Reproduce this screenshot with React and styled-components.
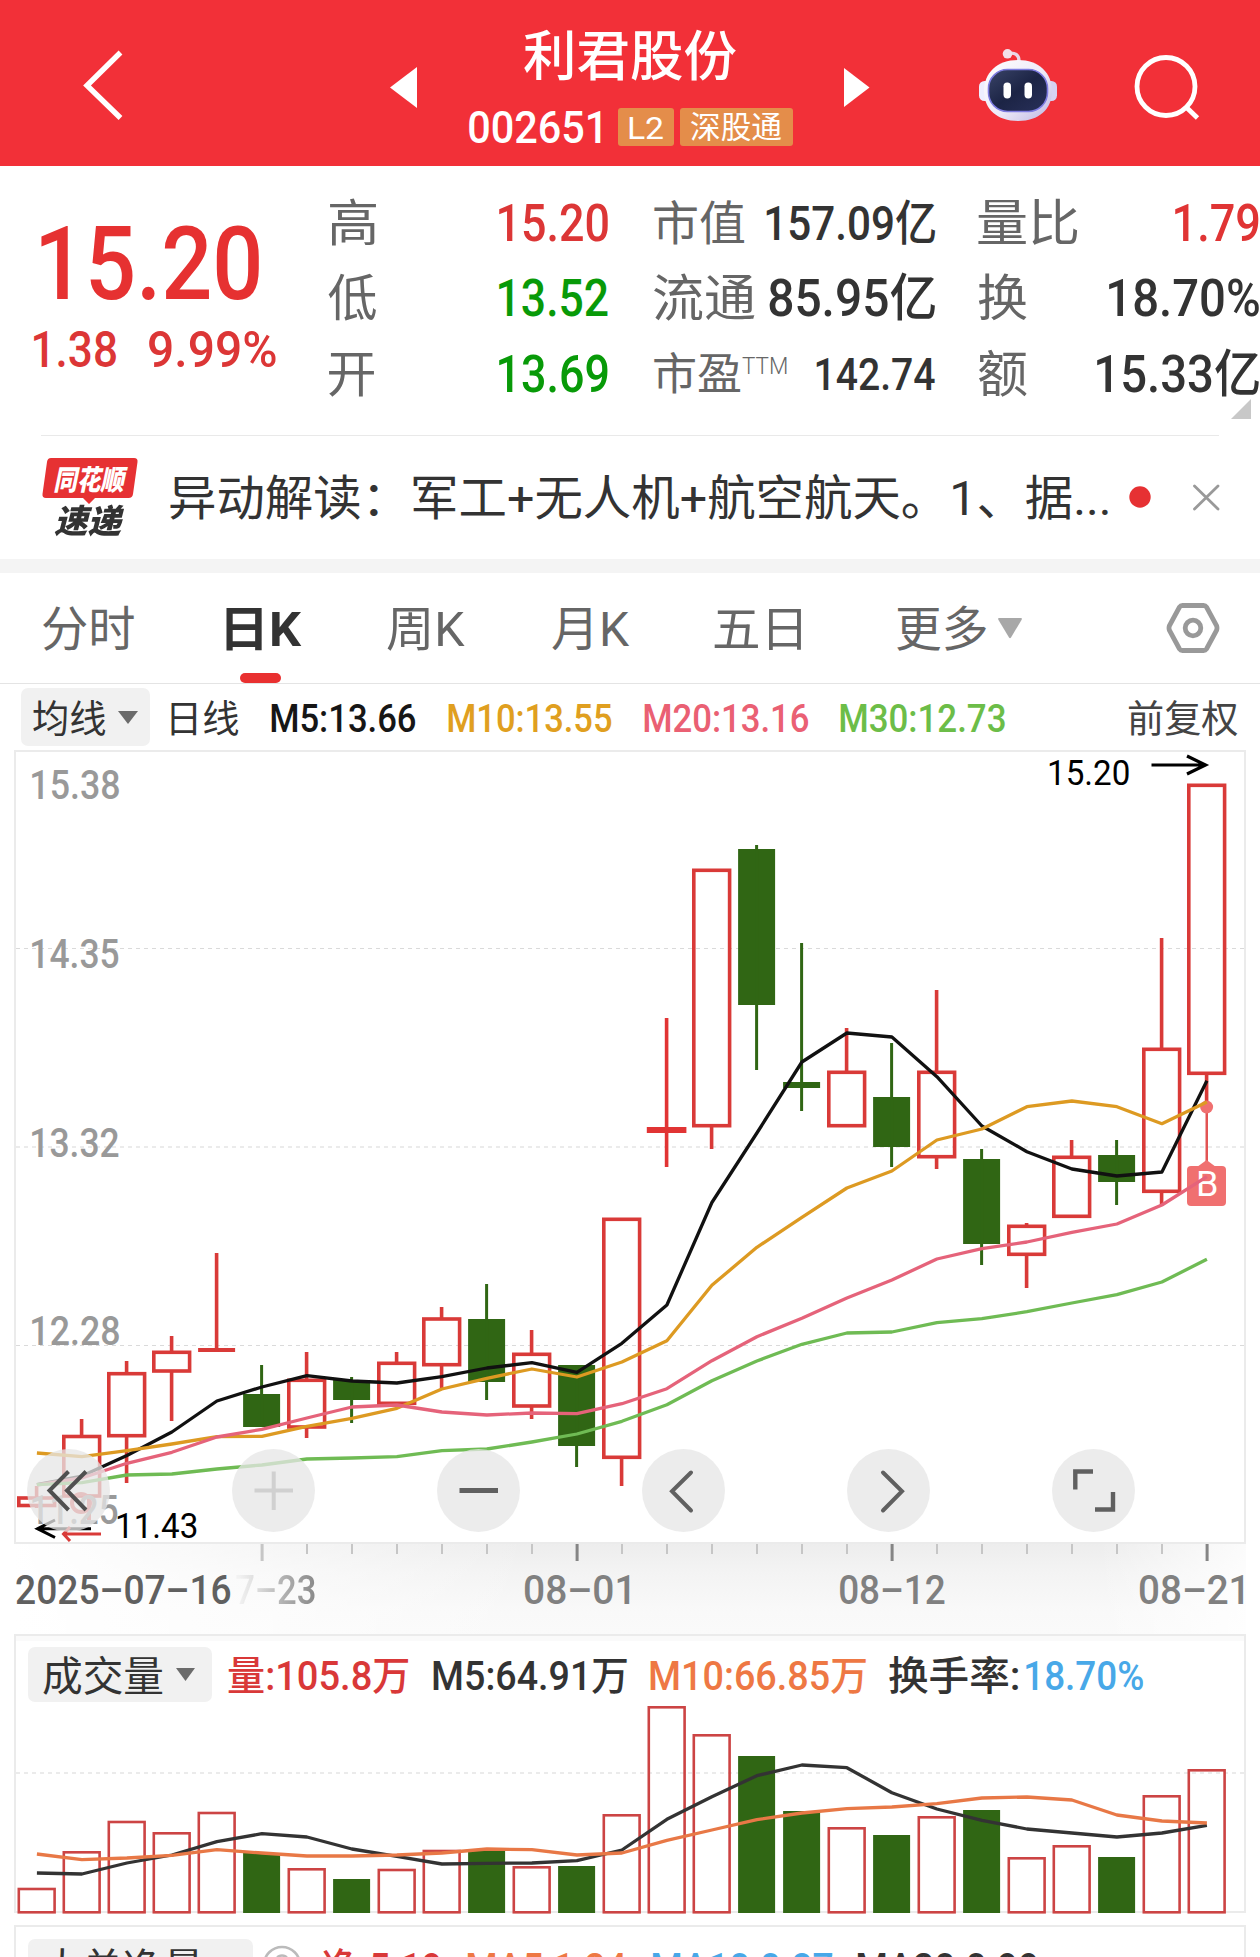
import React, { useLayoutEffect, useRef, useState } from 'react';
import styled, { createGlobalStyle, css } from 'styled-components';

const FONT = 'Roboto, "Noto Sans CJK SC", sans-serif';
const CJK = '"Noto Sans CJK SC", sans-serif';

const GlobalStyle = createGlobalStyle`
  * { box-sizing: border-box; }
  body { margin: 0; background: #fff; }
`;

/* ---------- text condensed to an exact width ---------- */

const FitBox = styled.div`
  flex: none;
  width: ${(p) => p.$w}px;
  height: ${(p) => p.$h}px;
  line-height: ${(p) => p.$h}px;
  margin: ${(p) => p.$m || 0};
  font-family: ${(p) => (p.$cjk ? CJK : FONT)};
  font-size: ${(p) => p.$size}px;
  font-weight: ${(p) => p.$weight || 400};
  font-style: ${(p) => (p.$italic ? 'italic' : 'normal')};
  color: ${(p) => p.$color || 'inherit'};
  white-space: pre;
`;

const FitText = styled.span`
  display: inline-block;
  transform-origin: 0 50%;
  ${(p) =>
    p.$fade &&
    css`
      background: linear-gradient(90deg, #f2f2f2 5%, #d9d9d9 30%, #b0b0b0 60%, #888 100%);
      background-clip: text;
      -webkit-background-clip: text;
      color: transparent;
    `}
`;

function Fit({ children, w, h = 50, dy = 1, size, weight, color, m, cjk, italic, fade }) {
  const ref = useRef(null);
  const [fit, setFit] = useState({ k: 1, x: 0 });
  useLayoutEffect(() => {
    const s = getComputedStyle(ref.current);
    const ctx = document.createElement('canvas').getContext('2d');
    ctx.font = `${s.fontStyle} ${s.fontWeight} ${s.fontSize} ${s.fontFamily}`;
    const t = ctx.measureText(String(children));
    const k = w / (t.actualBoundingBoxRight + t.actualBoundingBoxLeft);
    setFit({ k, x: t.actualBoundingBoxLeft * k });
  }, [children, w]);
  return (
    <FitBox $w={w} $h={h} $size={size} $weight={weight} $color={color} $m={m} $cjk={cjk} $italic={italic}>
      <FitText ref={ref} $fade={fade} style={{ transform: `translate(${fit.x}px, ${dy}px) scaleX(${fit.k})` }}>
        {children}
      </FitText>
    </FitBox>
  );
}

/* ---------- page ---------- */

const Page = styled.div`
  width: 1260px;
  height: 1957px;
  overflow: hidden;
  background: #fff;
  display: flex;
  flex-direction: column;
  > * { flex: none; }
`;

/* ---------- header ---------- */

const Header = styled.header`
  height: 166px;
  background: #f23038;
  display: flex;
  align-items: flex-start;
  color: #fff;
`;

const HeaderIcon = styled.svg`
  display: block;
  flex: none;
  margin: ${(p) => p.$m};
`;

const TitleBlock = styled.div`
  width: 325px;
  margin-left: 52px;
  padding-top: 26px;
`;

const CodeRow = styled.div`
  display: flex;
  align-items: center;
  height: 38px;
  margin-top: 22px;
`;

const Badge = styled.div`
  width: ${(p) => p.$w}px;
  height: 38px;
  margin-left: ${(p) => p.$ml}px;
  background: #e48d4a;
  border-radius: 3px;
  display: flex;
  align-items: center;
  justify-content: center;
`;

/* ---------- quote board ---------- */

const Quotes = styled.section`
  position: relative;
  height: 269px;
  display: flex;
  padding-left: 34px;
`;

const PriceBlock = styled.div`
  width: 294.6px;
  padding-top: 37px;
`;

const ChangeRow = styled.div`
  display: flex;
  gap: 32.5px;
  margin-top: 1px;
`;

const StatColumn = styled.div`
  width: ${(p) => p.$w}px;
  margin-right: ${(p) => p.$mr}px;
  padding-top: 19px;
`;

const StatRow = styled.div`
  height: 75.6px;
  display: flex;
  align-items: center;
  justify-content: space-between;
`;

const StatLabel = styled.div`
  display: flex;
  align-items: center;
  color: #666;
`;

const Corner = styled.div`
  position: absolute;
  left: 1231px;
  top: 233px;
  border-left: 20px solid transparent;
  border-bottom: 20px solid #c8c8c8;
`;

/* ---------- news ---------- */

const Divider = styled.div`
  height: 1px;
  margin: 0 41px;
  background: #e9e9e9;
`;

const News = styled.section`
  height: 123px;
  display: flex;
  align-items: flex-start;
`;

const Logo = styled.div`
  position: relative;
  width: 98px;
  height: 84px;
  margin: 21px 0 0 41px;
  padding: 1px 0 0 13px;
`;

const LogoBubble = styled.svg`
  position: absolute;
  left: 0;
  top: 0;
`;

const LogoText = styled.div`
  position: relative;
`;

const Band = styled.div`
  height: 14px;
  background: #f4f4f4;
`;

/* ---------- tabs ---------- */

const Tabs = styled.nav`
  height: 111px;
  display: flex;
  border-bottom: 1px solid #e4e4e4;
  color: #666;
`;

const Tab = styled.div`
  position: relative;
  height: 110px;
  padding-top: 31px;
  margin-left: ${(p) => p.$ml}px;
  display: flex;
  color: ${(p) => (p.$active ? '#333' : '#666')};
  ${(p) =>
    p.$active &&
    css`
      &::after {
        content: '';
        position: absolute;
        left: 14px;
        bottom: 0;
        width: 41px;
        height: 10px;
        border-radius: 5px;
        background: #e93030;
      }
    `}
`;

/* ---------- indicator legends ---------- */

const Legend = styled.div`
  height: ${(p) => p.$h}px;
  padding-top: ${(p) => p.$pt}px;
  padding-left: ${(p) => p.$pl}px;
  display: flex;
  align-items: flex-start;
`;

const Pill = styled.div`
  flex: none;
  width: ${(p) => p.$w}px;
  height: ${(p) => p.$h}px;
  padding-left: ${(p) => p.$pl}px;
  border-radius: 7px;
  background: #f1f1f1;
  display: flex;
  align-items: center;
  color: #333;
`;

const Caret = styled.svg`
  display: block;
  flex: none;
  margin: ${(p) => p.$m || 0};
`;

/* ---------- charts ---------- */

const Panel = styled.section`
  position: relative;
  height: ${(p) => p.$h}px;
  margin: ${(p) => p.$mt || 0}px 14px 0;
  border: 2px solid #ebebeb;
  background: ${(p) => (p.$shade ? 'linear-gradient(180deg, #fafafa 0 5px, #fff 5px)' : '#fff')};
`;

const Canvas = styled.svg`
  position: absolute;
  left: 0;
  top: 0;
  display: block;
`;

const PanelLegend = styled(Legend)`
  position: relative;
`;

const Overlay = styled.div`
  position: absolute;
  left: ${(p) => p.$x}px;
  top: ${(p) => p.$y}px;
`;

const RoundButton = styled.div`
  position: absolute;
  left: ${(p) => p.$x}px;
  top: 697px;
  width: 83px;
  height: 83px;
  border-radius: 50%;
  background: rgba(230, 230, 230, 0.76);
  svg { display: block; }
`;

const TimeAxis = styled.div`
  height: 90px;
  margin: 0 14px;
  background:
    linear-gradient(90deg, #fff 0, rgba(255, 255, 255, 0) 42%),
    linear-gradient(270deg, rgba(255, 255, 255, 0.8) 0, rgba(255, 255, 255, 0) 12%),
    linear-gradient(180deg, #ededed 0, #f3f3f3 30%, #f9f9f9 75%, #fafafa 100%);
`;

const Ticks = styled.svg`
  display: block;
`;

const Dates = styled.div`
  display: flex;
  padding: 3px 0 0 2px;
`;

/* ---------- data ---------- */

const RED = '#d93a38';
const GREEN = '#306614';
const cx = (i) => 36.6 + i * 45;

/* [kind, top, bottom, high, low] */
const CANDLES = [
  ['r', 1498, 1505.5, 1486, 1508],
  ['r', 1436.5, 1496, 1419, 1496],
  ['r', 1373.7, 1435.7, 1361, 1483],
  ['r', 1352.3, 1371, 1336, 1421],
  ['t', 1348, 1352, 1253, 1352],
  ['g', 1394, 1427, 1365, 1427],
  ['r', 1380.3, 1427, 1352, 1438],
  ['g', 1380, 1400, 1377, 1423],
  ['r', 1363.3, 1403.3, 1352, 1403],
  ['r', 1319, 1364.7, 1307, 1389],
  ['g', 1319, 1382, 1284, 1400],
  ['r', 1354.3, 1406, 1330, 1419],
  ['g', 1365, 1446, 1365, 1467],
  ['r', 1219.3, 1457.3, 1219, 1486],
  ['t', 1127, 1133, 1018, 1167],
  ['r', 870.3, 1125.7, 870, 1149],
  ['g', 849, 1005, 845, 1070],
  ['g', 1082, 1088, 943, 1111],
  ['r', 1072.3, 1125.7, 1028, 1125],
  ['g', 1097, 1147, 1043, 1167],
  ['r', 1072.3, 1156.7, 990, 1169],
  ['g', 1159, 1244, 1149, 1265],
  ['r', 1226.3, 1254.3, 1223, 1288],
  ['r', 1157.3, 1216.3, 1140, 1216],
  ['g', 1155, 1182, 1140, 1205],
  ['r', 1049.3, 1191.3, 938, 1206],
  ['r', 785.3, 1073.3, 785, 1107],
];

const MA5 = [1484.5, 1476, 1455.5, 1432, 1401, 1387, 1375.7, 1381, 1383, 1376.7, 1368, 1362.7, 1372.3, 1343.3, 1305, 1202.5, 1133, 1062, 1033, 1037, 1076.7, 1126, 1151.7, 1169, 1176, 1172, 1080.7];
const MA10 = [1453, 1456.7, 1450.7, 1444, 1436.7, 1436.3, 1426.3, 1418.3, 1408.3, 1389, 1378.3, 1369, 1377, 1362, 1340.7, 1285.3, 1247.3, 1217.3, 1188, 1171, 1140, 1129, 1106.7, 1101, 1106.7, 1123.7, 1102];
const MA20 = [1485, 1478, 1463.3, 1452.3, 1437, 1429.3, 1418, 1407, 1405, 1412, 1415, 1413, 1413.7, 1403.7, 1388.7, 1360.7, 1336.7, 1318.3, 1298, 1280, 1259, 1248.7, 1242, 1232.3, 1224, 1205, 1176.7];
const MA30 = [1484.7, 1482.7, 1475, 1474, 1469, 1465, 1459, 1458, 1456.7, 1450.7, 1449, 1442, 1434, 1421.3, 1404.7, 1380.7, 1361, 1344.3, 1333, 1332, 1322.7, 1318.7, 1311.7, 1303, 1294.7, 1282, 1259.3];

const VOLUME = [
  ['r', 1889], ['r', 1852.3], ['r', 1822], ['r', 1833.3], ['r', 1813], ['g', 1853], ['r', 1869.3],
  ['g', 1879], ['r', 1870], ['r', 1851], ['g', 1851], ['r', 1867.3], ['g', 1866], ['r', 1815.3],
  ['r', 1707.3], ['r', 1735.3], ['g', 1756], ['g', 1811], ['r', 1828.3], ['g', 1835], ['r', 1817.3],
  ['g', 1810], ['r', 1858.3], ['r', 1846.3], ['g', 1857], ['r', 1796.3], ['r', 1770.3],
];
const VMA5 = [1873, 1874, 1863, 1855, 1841.7, 1833.7, 1837, 1849, 1856.3, 1864, 1863.3, 1863, 1860.7, 1850, 1819.3, 1796.7, 1775.7, 1765, 1767.7, 1792.7, 1809, 1820.3, 1829, 1833, 1837, 1833, 1825.3];
const VMA10 = [1854, 1859.7, 1858, 1855.3, 1849.7, 1853, 1856, 1856, 1855, 1853, 1849, 1849.7, 1855, 1853, 1840.3, 1830, 1819.7, 1813, 1808.7, 1807, 1803.7, 1798, 1797, 1800, 1815, 1821, 1823];

function Candle({ i, kind, top, bottom, high, low }) {
  const x = cx(i);
  if (kind === 'r') {
    return (
      <g stroke={RED} strokeWidth="3.6" fill="none">
        <rect x={x - 17.8} y={top} width="35.8" height={bottom - top} />
        {high < top && <line x1={x} x2={x} y1={high} y2={top} />}
        {low > bottom && <line x1={x} x2={x} y1={bottom} y2={low} />}
      </g>
    );
  }
  const color = kind === 't' ? (i === 14 ? '#e13434' : RED) : GREEN;
  const half = i === 14 ? 19.8 : 18.5;
  return (
    <g fill={color}>
      <rect x={x - half} y={top} width={half * 2} height={bottom - top} />
      <rect x={x - (kind === 't' ? 1.8 : 1.5)} y={high} width={kind === 't' ? 3.6 : 3} height={low - high} />
    </g>
  );
}

function Line({ data, color, width = 3.3 }) {
  return (
    <polyline
      points={data.map((y, i) => `${cx(i) + 0.3},${y}`).join(' ')}
      fill="none"
      stroke={color}
      strokeWidth={width}
      strokeLinejoin="round"
    />
  );
}

const BUTTONS = [
  { x: 10.5, art: <path d="M41.5 22.5 22.5 41.5 41.5 61M59 22.5 40 41.5 59 61" stroke="#505050" /> },
  { x: 215.5, art: <path d="M22.5 41.5H61M41.7 22.5V61" stroke="#d0d0d0" /> },
  { x: 420.5, art: <path d="M22.5 41.5H61" stroke="#606060" strokeWidth="5" /> },
  { x: 625.5, art: <path d="M49 23.5 30 42.2 49 61.5" stroke="#606060" strokeLinecap="round" /> },
  { x: 830.5, art: <path d="M36 23.5 55 42.2 36 61.5" stroke="#606060" strokeLinecap="round" /> },
  { x: 1035.5, art: <path d="M41 22.5H23.3V40.5M43 60.5H61V43" stroke="#606060" strokeWidth="4.4" /> },
];

function RobotIcon() {
  return (
    <HeaderIcon $m="48px 0 0 108px" width="80" height="75" viewBox="0 0 80 75">
      <defs>
        <linearGradient id="shell" x1="0" y1="0" x2="1" y2="1">
          <stop offset="0" stopColor="#fff" />
          <stop offset="0.55" stopColor="#eeeaf8" />
          <stop offset="1" stopColor="#bcb6e2" />
        </linearGradient>
        <linearGradient id="visor" x1="0" y1="0" x2="1" y2="1">
          <stop offset="0" stopColor="#3a4468" />
          <stop offset="0.5" stopColor="#1c2445" />
          <stop offset="1" stopColor="#28305a" />
        </linearGradient>
      </defs>
      <path d="M30 5.5C37 4 41 7 41 13" fill="none" stroke="#e9d6e6" strokeWidth="3.4" />
      <circle cx="29.5" cy="5.8" r="4.8" fill="#f3dfe9" />
      <rect x="1" y="33" width="12" height="20" rx="5.5" fill="#eef" />
      <rect x="67" y="33" width="12" height="20" rx="5.5" fill="#d6d3f2" />
      <path d="M40 12C61 12 74 25 74 43S61 73 40 73 6 61 6 43 19 12 40 12Z" fill="url(#shell)" />
      <rect x="10.5" y="21.5" width="59" height="42" rx="19" fill="url(#visor)" stroke="#7d7be0" strokeWidth="1.6" />
      <rect x="25.5" y="34.5" width="7.5" height="16" rx="3.7" fill="#fff" />
      <rect x="46.5" y="34.5" width="7.5" height="16" rx="3.7" fill="#fff" />
    </HeaderIcon>
  );
}

export default function App() {
  return (
    <Page>
      <GlobalStyle />
      <Header>
        <HeaderIcon $m="48px 0 0 80px" width="46" height="74" viewBox="0 0 46 74">
          <path d="M40.500 4.500 7 37.500 40.500 70" fill="none" stroke="#fff" strokeWidth="5.400" />
        </HeaderIcon>
        <HeaderIcon $m="67px 0 0 264px" width="27" height="41" viewBox="0 0 27 41">
          <path d="M27 0V41L0 20.500Z" fill="#fff" />
        </HeaderIcon>
        <TitleBlock>
          <Fit w={212} h={60} dy={-3} size={54} weight={500} m="0 0 0 54.500px" cjk>利君股份</Fit>
          <CodeRow>
            <Fit w={131.500} h={38} size={45} weight={500}>002651</Fit>
            <Badge $w={56} $ml={17.500}><Fit w={34} h={38} dy={0.5} size={32}>L2</Fit></Badge>
            <Badge $w={113} $ml={6}><Fit w={91} h={38} size={31}>深股通</Fit></Badge>
          </CodeRow>
        </TitleBlock>
        <HeaderIcon $m="68px 0 0 50px" width="26" height="39" viewBox="0 0 26 39">
          <path d="M0 0V39L25.500 19.500Z" fill="#fff" />
        </HeaderIcon>
        <RobotIcon />
        <HeaderIcon $m="50px 0 0 73px" width="72" height="72" viewBox="0 0 72 72">
          <circle cx="35" cy="36.500" r="29" fill="none" stroke="#fff" strokeWidth="4.800" />
          <path d="M54.500 56.500 66.500 68" stroke="#fff" strokeWidth="4.800" />
        </HeaderIcon>
      </Header>

      <Quotes>
        <PriceBlock>
          <Fit w={218} h={120} size={102} weight={500} color="#e63131" m="0 0 0 6.500px">15.20</Fit>
          <ChangeRow>
            <Fit w={82.500} size={50.500} weight={500} color="#dc3636">1.38</Fit>
            <Fit w={126.500} size={50.500} weight={500} color="#dc3636">9.99%</Fit>
          </ChangeRow>
        </PriceBlock>
        <StatColumn $w={279.500} $mr={45.500}>
          <StatRow><StatLabel><Fit w={47} size={50}>高</Fit></StatLabel><Fit w={109} size={51.500} weight={500} color="#dc3636">15.20</Fit></StatRow>
          <StatRow><StatLabel><Fit w={48} size={50}>低</Fit></StatLabel><Fit w={109} size={51.500} weight={500} color="#089a08">13.52</Fit></StatRow>
          <StatRow><StatLabel><Fit w={46} size={50}>开</Fit></StatLabel><Fit w={109} size={51.500} weight={500} color="#089a08">13.69</Fit></StatRow>
        </StatColumn>
        <StatColumn $w={281} $mr={43.500}>
          <StatRow><StatLabel><Fit w={91} size={47}>市值</Fit></StatLabel><Fit w={169} size={47.500} weight={500} color="#333">157.09亿</Fit></StatRow>
          <StatRow><StatLabel><Fit w={101} size={50}>流通</Fit></StatLabel><Fit w={166} size={51.500} weight={500} color="#333">85.95亿</Fit></StatRow>
          <StatRow>
            <StatLabel>
              <Fit w={87} size={44}>市盈</Fit>
              <Fit w={45} h={30} size={23.500} weight={300} m="0 0 17px 1px">TTM</Fit>
            </StatLabel>
            <Fit w={119} size={45} weight={500} color="#333">142.74</Fit>
          </StatRow>
        </StatColumn>
        <StatColumn $w={280.500} $mr={0}>
          <StatRow><StatLabel><Fit w={100} size={50}>量比</Fit></StatLabel><Fit w={84} size={51.500} weight={500} color="#e03434">1.79</Fit></StatRow>
          <StatRow><StatLabel><Fit w={49} size={50}>换</Fit></StatLabel><Fit w={150} size={51.500} weight={500} color="#333">18.70%</Fit></StatRow>
          <StatRow><StatLabel><Fit w={49} size={50}>额</Fit></StatLabel><Fit w={162} size={51.500} weight={500} color="#333">15.33亿</Fit></StatRow>
        </StatColumn>
        <Corner />
      </Quotes>
      <Divider />

      <News>
        <Logo>
          <LogoBubble width="98" height="50" viewBox="0 0 98 50">
            <path d="M10 1H93Q97 1 96.500 5L92 37Q91.500 41 87.500 41H54L48 47 42 41H5Q1 41 1.500 37L6 5Q6.500 1 10 1Z" fill="#e63133" />
          </LogoBubble>
          <LogoText>
            <Fit w={74} h={40} dy={0} size={28} weight={900} color="#fff" italic cjk>同花顺</Fit>
            <Fit w={71} h={42} dy={0} size={33} weight={900} color="#333" italic cjk>速递</Fit>
          </LogoText>
        </Logo>
        <Fit w={938} h={60} size={47.500} color="#333" m="32px 0 0 30.500px">异动解读：军工+无人机+航空航天。1、据...</Fit>
        <HeaderIcon $m="50px 0 0 21px" width="22" height="22" viewBox="0 0 22 22">
          <circle cx="11" cy="11" r="10.700" fill="#e63133" />
        </HeaderIcon>
        <HeaderIcon $m="48px 0 0 41px" width="28" height="27" viewBox="0 0 28 27">
          <path d="M2.500 2 26 25M26 2 2.500 25" stroke="#999" strokeWidth="2.800" strokeLinecap="round" />
        </HeaderIcon>
      </News>
      <Band />

      <Tabs>
        <Tab $ml={43}><Fit w={91.500} size={48}>分时</Fit></Tab>
        <Tab $ml={91.500} $active><Fit w={75.500} size={48} weight={700}>日K</Fit></Tab>
        <Tab $ml={85.500}><Fit w={78.500} size={48}>周K</Fit></Tab>
        <Tab $ml={86}><Fit w={78} size={48}>月K</Fit></Tab>
        <Tab $ml={84}><Fit w={87} size={48}>五日</Fit></Tab>
        <Tab $ml={96}>
          <Fit w={89.500} size={48}>更多</Fit>
          <Caret $m="14px 0 0 12px" width="24" height="21" viewBox="0 0 24 21">
            <path d="M1 0H23Q24.500 0 23.500 2L13 19.500Q12 21 11 19.500L0.500 2Q-0.500 0 1 0Z" fill="#a8a8a8" />
          </Caret>
        </Tab>
        <HeaderIcon $m="29px 0 0 143.500px" width="54" height="52" viewBox="0 0 54 52">
          <path d="M16.500 3.500H37.500Q39.500 3.500 40.500 5L50.500 23.500Q51.500 26 50.500 28.500L40.500 47Q39.500 48.500 37.500 48.500H16.500Q14.500 48.500 13.500 47L3.500 28.500Q2.500 26 3.500 23.500L13.500 5Q14.500 3.500 16.500 3.500Z" fill="none" stroke="#999" strokeWidth="4.800" />
          <circle cx="27" cy="26" r="7.800" fill="none" stroke="#999" strokeWidth="4.800" />
        </HeaderIcon>
      </Tabs>

      <Legend $h={66} $pt={4} $pl={21}>
        <Pill $w={129} $h={58} $pl={12}>
          <Fit w={73} dy={2} size={37.500}>均线</Fit>
          <Caret $m="0 0 0 12px" width="20" height="13" viewBox="0 0 20 13"><path d="M0 0H20L10 13Z" fill="#6b6b6b" /></Caret>
        </Pill>
        <Fit w={68} h={58} dy={2} size={37.500} color="#333" m="0 0 0 21px">日线</Fit>
        <Fit w={145} h={61} size={38} weight={500} color="#161616" m="0 0 0 32px">M5:13.66</Fit>
        <Fit w={164} h={61} size={38} weight={500} color="#e09f20" m="0 0 0 32px">M10:13.55</Fit>
        <Fit w={165} h={61} size={38} weight={500} color="#ea6073" m="0 0 0 32px">M20:13.16</Fit>
        <Fit w={165} h={61} size={38} weight={500} color="#6cbd48" m="0 0 0 30.500px">M30:12.73</Fit>
        <Fit w={110} h={58} dy={2} size={37.500} color="#444" m="0 0 0 123px">前复权</Fit>
      </Legend>

      <Panel $h={794}>
        <Canvas width="1228" height="790" viewBox="16 752 1228 790">
          <g stroke="#dadada" strokeDasharray="4 4">
            <line x1="16" x2="1244" y1="948.5" y2="948.5" />
            <line x1="16" x2="1244" y1="1147" y2="1147" strokeWidth="2" stroke="#ebebeb" />
            <line x1="16" x2="1244" y1="1345.5" y2="1345.5" />
          </g>
          {CANDLES.map(([kind, top, bottom, high, low], i) => (
            <Candle key={i} i={i} kind={kind} top={top} bottom={bottom} high={high} low={low} />
          ))}
          <g fill="#f07070">
            <rect x="1205.500" y="1107" width="2.500" height="56" fill="#e25454" />
            <circle cx="1206.600" cy="1107" r="6.500" />
            <path d="M1197 1167 1206.600 1160 1216 1167Z" />
            <rect x="1187" y="1166" width="39" height="40" rx="4" />
          </g>
          <path d="M1151.500 765H1205M1187 756 1205.500 765 1187 774" fill="none" stroke="#000" strokeWidth="3.200" />
          <path d="M91 1528.700H38M55 1520 37.500 1528.700 55 1537.500" fill="none" stroke="#000" strokeWidth="3" />
          <path d="M101 1534H64M70 1527 63.500 1534 70 1541" fill="none" stroke={RED} strokeWidth="3" />
          <g fill="none" stroke="#e25454" strokeWidth="4">
            <circle cx="81" cy="1503" r="9" />
            <path d="M89 1494V1520" />
          </g>
        </Canvas>
        <Overlay $x={1182} $y={412}><Fit w={18.500} h={40} size={35} color="#fff">B</Fit></Overlay>
        <Canvas width="1228" height="790" viewBox="16 752 1228 790">
          <Line data={MA5} color="#111" />
          <Line data={MA10} color="#dd9a22" />
          <Line data={MA20} color="#e5637a" />
          <Line data={MA30} color="#6fbb54" />
        </Canvas>
        <Overlay $x={15.5} $y={8}><Fit w={87} size={40} weight={500} color="#999">15.38</Fit></Overlay>
        <Overlay $x={15.5} $y={177}><Fit w={87} size={40} weight={500} color="#999">14.35</Fit></Overlay>
        <Overlay $x={15.5} $y={366}><Fit w={87} size={40} weight={500} color="#999">13.32</Fit></Overlay>
        <Overlay $x={15.5} $y={554}><Fit w={87} size={40} weight={500} color="#999">12.28</Fit></Overlay>
        <Overlay $x={16} $y={733}><Fit w={86} size={40} weight={500} color="#999">11.25</Fit></Overlay>
        <Overlay $x={1033} $y={-4}><Fit w={80} dy={0} size={34.5} color="#000">15.20</Fit></Overlay>
        <Overlay $x={101} $y={749}><Fit w={80} dy={0} size={34.5} color="#000">11.43</Fit></Overlay>
        {BUTTONS.map((b) => (
          <RoundButton key={b.x} $x={b.x}>
            <svg width="83" height="83" viewBox="0 0 83 83" fill="none" strokeWidth="4">{b.art}</svg>
          </RoundButton>
        ))}
      </Panel>

      <TimeAxis>
        <Ticks width="1232" height="18" viewBox="14 0 1232 18">
          {CANDLES.map((c, i) => {
            if (i < 5) return null;
            const major = i === 5 || i === 12 || i === 19 || i === 26;
            return (
              <rect
                key={i}
                x={cx(i) - (major ? 1 : 0.6)}
                y="0"
                width={major ? 3 : 2}
                height={major ? 17 : 10}
                fill={major && i > 5 ? '#858585' : '#c6c6c6'}
              />
            );
          })}
        </Ticks>
        <Dates>
          <Fit w={215} size={40} weight={500} color="#606060">2025–07–16</Fit>
          <Fit w={79} size={40} weight={500} m="0 0 0 4.500px" fade>7–23</Fit>
          <Fit w={104} size={40} weight={500} color="#808080" m="0 0 0 210.500px">08–01</Fit>
          <Fit w={105} size={40} weight={500} color="#808080" m="0 0 0 211px">08–12</Fit>
          <Fit w={103} size={40} weight={500} color="#808080" m="0 0 0 194.500px">08–21</Fit>
        </Dates>
      </TimeAxis>

      <Panel $h={279} $shade>
        <Canvas width="1228" height="278" viewBox="16 1636 1228 278">
          <line x1="16" x2="1244" y1="1773" y2="1773" stroke="#ebebeb" strokeWidth="2" strokeDasharray="4 4" />
          {VOLUME.map(([kind, top], i) =>
            kind === 'r' ? (
              <rect key={i} x={cx(i) - 17.8} y={top} width="35.8" height={1912.3 - top} fill="none" stroke="#cc4444" strokeWidth="2.6" />
            ) : (
              <rect key={i} x={cx(i) - 18.5} y={top} width="37" height={1913 - top} fill={GREEN} />
            )
          )}
          <Line data={VMA5} color="#333" />
          <Line data={VMA10} color="#e87846" />
        </Canvas>
        <PanelLegend $h={70} $pt={11} $pl={12}>
          <Pill $w={184} $h={55} $pl={15}>
            <Fit w={120} dy={2} size={41}>成交量</Fit>
            <Caret $m="0 0 0 13px" width="19" height="13" viewBox="0 0 19 13"><path d="M0 0H19L9.500 13Z" fill="#6b6b6b" /></Caret>
          </Pill>
          <Fit w={180.500} h={57} size={40} weight={500} color="#d93838" m="0 0 0 16px">量:105.8万</Fit>
          <Fit w={194} h={57} size={40} weight={500} color="#333" m="0 0 0 24px">M5:64.91万</Fit>
          <Fit w={216} h={57} size={40} weight={500} color="#ee7844" m="0 0 0 23.500px">M10:66.85万</Fit>
          <Fit w={130} h={57} size={40} weight={500} color="#333" m="0 0 0 22.500px">换手率:</Fit>
          <Fit w={117} h={57} size={40} weight={500} color="#48a8e8" m="0 0 0 7.500px">18.70%</Fit>
        </PanelLegend>
      </Panel>

      <Panel $h={279} $mt={12}>
        <PanelLegend $h={70} $pt={12} $pl={12}>
          <Pill $w={225} $h={55} $pl={15}>
            <Fit w={160} dy={2} size={41}>大单净量</Fit>
            <Caret $m="0 0 0 14px" width="19" height="13" viewBox="0 0 19 13"><path d="M0 0H19L9.500 13Z" fill="#6b6b6b" /></Caret>
          </Pill>
          <HeaderIcon $m="6px 0 0 9px" width="40" height="40" viewBox="0 0 40 40">
            <circle cx="20" cy="20" r="18" fill="none" stroke="#bbb" strokeWidth="2.600" />
            <path d="M14.500 15.500Q15 10.500 20 10.500T25.500 15.500Q25.500 18.500 20 21V25" fill="none" stroke="#bbb" strokeWidth="2.600" />
          </HeaderIcon>
          <Fit w={118} h={57} size={40} weight={500} color="#d93838" m="0 0 0 21px">净:5.19</Fit>
          <Fit w={159} h={57} size={40} weight={500} color="#ee7844" m="0 0 0 26px">MA5:1.24</Fit>
          <Fit w={181} h={57} size={40} weight={500} color="#48a8e8" m="0 0 0 26px">MA10:0.87</Fit>
          <Fit w={181} h={57} size={40} weight={500} color="#333" m="0 0 0 24px">MA20:0.99</Fit>
        </PanelLegend>
      </Panel>
    </Page>
  );
}
